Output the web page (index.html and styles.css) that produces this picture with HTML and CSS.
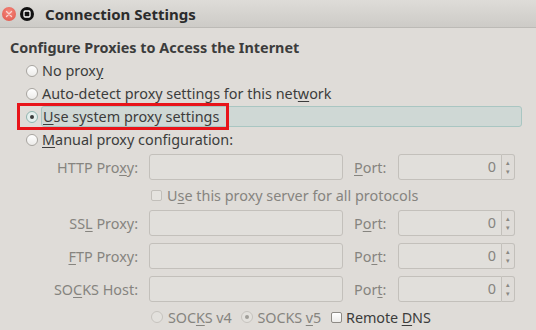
FILE: index.html
```html
<!DOCTYPE html>
<html lang="en">
<head>
    <meta charset="UTF-8">
    <title>Connection Settings</title>
    <link rel="stylesheet" href="styles.css">
</head>
<body>
    <!-- Title bar -->
    <div class="titlebar">
        <span class="btn-close">
            <svg width="14" height="14" viewBox="0 0 14 14"><path d="M4.5 4.5 L9.5 9.5 M9.5 4.5 L4.5 9.5" stroke="#fbd3cf" stroke-width="1.4" stroke-linecap="round"/></svg>
        </span>
        <span class="btn-max">
            <svg width="14" height="14" viewBox="0 0 14 14"><rect x="4" y="4" width="6" height="6" rx="1.2" fill="none" stroke="#fff" stroke-width="1.3"/></svg>
        </span>
        <span class="title">Connection Settings</span>
    </div>

    <div class="content">
        <h2>Configure Proxies to Access the Internet</h2>

        <div class="options">
            <div class="opt"><span class="radio"></span><span>No prox<u>y</u></span></div>
            <div class="opt"><span class="radio"></span><span>Auto-detect proxy settings for this net<u>w</u>ork</span></div>
            <div class="opt current">
                <span class="radio checked"></span>
                <span class="focus"><u>U</u>se system proxy settings</span>
                <span class="marker"></span>
            </div>
            <div class="opt"><span class="radio"></span><span><u>M</u>anual proxy configuration:</span></div>
        </div>

        <div class="manual">
            <label><span>HTTP Pro<u>x</u>y:</span></label>
            <div class="field"></div>
            <label class="port"><span><u>P</u>ort:</span></label>
            <div class="spin"><div class="num">0</div><div class="arrows"><span>&#9652;</span><span>&#9662;</span></div></div>

            <div class="check-row"><span class="box"></span><span>U<u>s</u>e this proxy server for all protocols</span></div>

            <label><span>SS<u>L</u> Proxy:</span></label>
            <div class="field"></div>
            <label class="port"><span>P<u>o</u>rt:</span></label>
            <div class="spin"><div class="num">0</div><div class="arrows"><span>&#9652;</span><span>&#9662;</span></div></div>

            <label><span><u>F</u>TP Proxy:</span></label>
            <div class="field"></div>
            <label class="port"><span>Po<u>r</u>t:</span></label>
            <div class="spin"><div class="num">0</div><div class="arrows"><span>&#9652;</span><span>&#9662;</span></div></div>

            <label><span>SO<u>C</u>KS Host:</span></label>
            <div class="field"></div>
            <label class="port"><span>Por<u>t</u>:</span></label>
            <div class="spin"><div class="num">0</div><div class="arrows"><span>&#9652;</span><span>&#9662;</span></div></div>

            <div class="socks-row">
                <span class="radio"></span><span class="dim">SOC<u>K</u>S v4</span>
                <span class="radio checked"></span><span class="dim">SOCKS <u>v</u>5</span>
                <span class="box on"></span><span>Remote <u>D</u>NS</span>
            </div>
        </div>
    </div>
</body>
</html>
```

FILE: styles.css
```css
/* GLOBAL */
body {
    margin: 0;
    width: 536px;
    height: 330px;
    overflow: hidden;
    background: #dfdcd8;
    font-family: "Noto Sans", sans-serif;
    font-size: 14.4px;
    color: #3c3c3c;
}

u {
    text-decoration: underline;
    text-underline-offset: 2px;
}

/* TITLE BAR */
.titlebar {
    height: 28px;
    display: flex;
    align-items: center;
    padding-left: 2px;
    background: linear-gradient(#dedcd8, #cdcbc7);
    border-bottom: 1px solid #bcbab6;
    box-sizing: border-box;
}

.btn-close, .btn-max {
    width: 14px;
    height: 14px;
    border-radius: 50%;
    display: flex;
}

.btn-close {
    background: radial-gradient(circle at 50% 35%, #f5867a, #e0564b);
}

.btn-max {
    margin-left: 4px;
    background: #111;
}

.title {
    margin-left: 11px;
    font-weight: bold;
    font-size: 15px;
    color: #2b2b2b;
}

/* CONTENT */
.content {
    padding: 10px 0 0 10px;
}

h2 {
    margin: 0;
    font-size: 14.4px;
    line-height: 20px;
    font-weight: bold;
}

.options {
    margin-top: 1px;
    padding-left: 16px;
}

.opt {
    height: 23px;
    display: flex;
    align-items: center;
    position: relative;
}

.radio {
    width: 10px;
    height: 10px;
    border: 1px solid #a8a5a0;
    border-radius: 50%;
    background: linear-gradient(#ffffff, #ecebe9);
    margin-right: 4px;
    flex: none;
    position: relative;
}

.radio.checked::after {
    content: "";
    position: absolute;
    left: 3px;
    top: 3px;
    width: 4px;
    height: 4px;
    border-radius: 50%;
    background: #3c3c3c;
}

.current .radio {
    background: #e5efed;
    border-color: #8fb3ae;
}

.focus {
    flex: 1;
    margin: 0 14px 0 -1px;
    padding-left: 1px;
    height: 19px;
    line-height: 19px;
    background: #cfd8d5;
    border: 1px solid #a9c6c2;
    border-radius: 3px;
}

/* red annotation box over the selected option */
.marker {
    position: absolute;
    left: -9px;
    top: -2px;
    width: 206px;
    height: 21px;
    border: 3px solid #e8141a;
}

/* MANUAL CONFIGURATION */
.manual {
    display: grid;
    grid-template-columns: 98px 194px 33px 117px;
    grid-template-rows: 26px 16px 26px 26px 26px 16px;
    column-gap: 11px;
    row-gap: 7px;
    margin-top: 3px;
    padding-left: 30px;
    color: #86847f;
}

.manual label {
    display: flex;
    align-items: center;
    justify-content: flex-end;
    white-space: nowrap;
}

.manual label.port {
    justify-content: flex-start;
}

.field {
    border: 1px solid #c3c0bb;
    border-radius: 3px;
    background: #e1dfdb;
}

.spin {
    display: flex;
}

.num {
    flex: 1;
    border: 1px solid #c3c0bb;
    border-radius: 3px 0 0 3px;
    background: #e1dfdb;
    text-align: right;
    padding-right: 5px;
    line-height: 24px;
}

.arrows {
    width: 12px;
    border: 1px solid #c3c0bb;
    border-left: none;
    border-radius: 0 3px 3px 0;
    display: flex;
    flex-direction: column;
    align-items: center;
    justify-content: center;
    font-size: 7px;
    line-height: 9px;
    color: #8a8883;
}

.check-row, .socks-row {
    grid-column: 2 / 5;
    display: flex;
    align-items: center;
    padding-left: 2px;
    white-space: nowrap;
}

.box {
    width: 9px;
    height: 9px;
    border: 1px solid #c2bfba;
    border-radius: 2px;
    background: #e5e3df;
    margin-right: 5px;
    flex: none;
}

.box.on {
    border-color: #8d8a85;
    background: linear-gradient(#ffffff, #ecebe9);
    margin-left: 10px;
    margin-right: 4px;
}

.socks-row {
    color: #3c3c3c;
    letter-spacing: -0.1px;
}

.socks-row .radio {
    border-color: #c6c3be;
    background: #e3e1dd;
    margin-right: 5px;
}

.socks-row .radio.checked::after {
    background: #a09e99;
}

.socks-row .dim {
    color: #86847f;
}

.socks-row .dim + .radio {
    margin-left: 9px;
}
```
